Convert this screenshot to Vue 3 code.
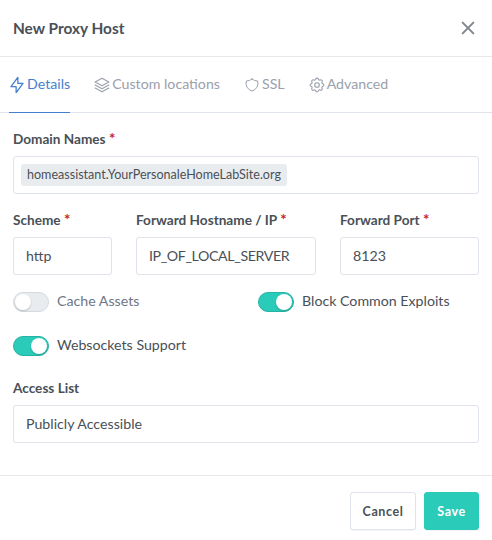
<script setup>
const tabs = [
  { name: 'Details', icon: 'bolt', box: '2.7 2.7 18.6 18.6', active: true },
  { name: 'Custom locations', icon: 'layers', box: '1.500 1.500 21 21' },
  { name: 'SSL', icon: 'shield', box: '0 0 24 24' },
  { name: 'Advanced', icon: 'gear', box: '1.500 1.500 21 21' }
]
const row = [
  { label: 'Scheme', value: 'http' },
  { label: 'Forward Hostname / IP', value: 'IP_OF_LOCAL_SERVER', tight: true },
  { label: 'Forward Port', value: '8123' }
]
const toggles = [
  { label: 'Cache Assets', on: false },
  { label: 'Block Common Exploits', on: true },
  { label: 'Websockets Support', on: true }
]
</script>

<template>
  <div class="modal">
    <header class="head">
      <h1 class="title">New Proxy Host</h1>
      <svg class="close" viewBox="0 0 24 24" width="16" height="16" fill="none" stroke="currentColor" stroke-width="3" stroke-linecap="round"><path d="M4 4l16 16M20 4L4 20"/></svg>
    </header>
    <nav class="tabs">
      <a v-for="t in tabs" :key="t.name" class="tab" :class="{ active: t.active }">
        <svg class="ico" :viewBox="t.box" fill="none" stroke="currentColor" stroke-width="1.5" stroke-linecap="round" stroke-linejoin="round">
          <path v-if="t.icon === 'bolt'" d="M13 3v7h6l-8 11v-7H5l8-11z"/>
          <g v-else-if="t.icon === 'layers'"><path d="M12 3L3 8l9 5 9-5-9-5z"/><path d="M3 12l9 5 9-5"/><path d="M3 16l9 5 9-5"/></g>
          <path v-else-if="t.icon === 'shield'" d="M12 3a12 12 0 0 0 8.5 3A12 12 0 0 1 12 21 12 12 0 0 1 3.500 6 12 12 0 0 0 12 3z"/>
          <g v-else><path d="M10.300 4.300c.4-1.800 3-1.800 3.400 0a1.700 1.700 0 0 0 2.600 1.100c1.500-.9 3.300.8 2.400 2.400a1.700 1.700 0 0 0 1 2.500c1.800.4 1.800 3 0 3.400a1.700 1.700 0 0 0-1 2.600c.9 1.500-.9 3.300-2.400 2.400a1.700 1.700 0 0 0-2.600 1c-.4 1.800-3 1.800-3.400 0a1.700 1.700 0 0 0-2.600-1c-1.500.9-3.300-.9-2.400-2.400a1.700 1.700 0 0 0-1-2.600c-1.800-.4-1.800-3 0-3.400a1.700 1.700 0 0 0 1-2.500c-.9-1.600.9-3.300 2.400-2.400 1 .6 2.300.1 2.600-1.100z"/><circle cx="12" cy="12" r="3"/></g>
        </svg>
        <span class="tabtext">{{ t.name }}</span>
      </a>
    </nav>
    <main class="body">
      <div class="field">
        <label class="label">Domain Names <b class="req">*</b></label>
        <div class="input domain"><span class="chip">homeassistant.YourPersonaleHomeLabSite.org</span></div>
      </div>
      <div class="triple">
        <div v-for="f in row" :key="f.label" class="field">
          <label class="label">{{ f.label }} <b class="req">*</b></label>
          <div class="input" :class="{ tight: f.tight }">{{ f.value }}</div>
        </div>
      </div>
      <div class="toggles">
        <div v-for="t in toggles" :key="t.label" class="toggle" :class="{ on: t.on }">
          <span class="switch"><span class="knob"></span></span>
          <span class="tlabel">{{ t.label }}</span>
        </div>
      </div>
      <div class="field">
        <label class="label">Access List</label>
        <div class="input">Publicly Accessible</div>
      </div>
    </main>
    <footer class="foot">
      <button class="btn cancel">Cancel</button>
      <button class="btn save">Save</button>
    </footer>
  </div>
</template>

<style scoped>
.modal {
  width: 492px;
  height: 540px;
  background: #fff;
  font-family: "Lato", "Noto Sans", sans-serif;
  font-size: 14.2px;
  color: #495057;
  overflow: hidden;
}
.head {
  height: 56px;
  border-bottom: 1px solid #e6e8ec;
  display: flex;
  align-items: center;
  justify-content: space-between;
  padding: 0 16px 0 13px;
}
.title {
  margin: 0;
  font-size: 15.4px;
  font-weight: 700;
  color: #495057;
}
.close { color: #7f868d; }
.tabs {
  height: 55px;
  display: flex;
  padding-left: 9px;
  border-bottom: 1px solid #dfe3ea;
}
.tab {
  display: flex;
  align-items: center;
  gap: 2px;
  margin-right: 24px;
  color: #9aa0ac;
  height: 56px;
  box-sizing: border-box;
  border-bottom: 1px solid transparent;
}
.tab.active {
  color: #467fcf;
  border-bottom-color: #467fcf;
}
.tabtext { padding-bottom: 2px; }
.ico { width: 16px; height: 16px; flex: none; }
.body { padding: 17px 13px 0; }
.field { display: flex; flex-direction: column; }
.label {
  font-size: 13.6px;
  font-weight: 700;
  line-height: 18px;
  margin-bottom: 8px;
  color: #495057;
}
.req { color: #cd201f; font-weight: 700; font-size: 15px; line-height: 1; }
.input {
  height: 38px;
  box-sizing: border-box;
  border: 1px solid #dfe3ea;
  border-radius: 3px;
  padding: 0 12px 2px;
  display: flex;
  align-items: center;
  color: #495057;
  white-space: nowrap;
}
.tight { letter-spacing: -.38px; }
.input.domain { padding: 0 7px; }
.chip {
  background: #e9ecef;
  border-radius: 3px;
  padding: 0 6px;
  height: 22px;
  line-height: 22px;
  font-size: 12.55px;
}
.triple {
  display: grid;
  grid-template-columns: 99px 180px 1fr;
  column-gap: 24px;
  margin-top: 17px;
}
.toggles {
  display: grid;
  grid-template-columns: 245px 1fr;
  row-gap: 24px;
  margin-top: 17px;
  margin-bottom: 23px;
}
.toggle { display: flex; align-items: center; gap: 8px; height: 20px; }
.switch {
  width: 36px;
  height: 20px;
  box-sizing: border-box;
  border-radius: 10px;
  background: #e9ecef;
  border: 1px solid #d5dae2;
  display: flex;
  align-items: center;
  padding: 0 1px;
}
.knob {
  width: 16px;
  height: 16px;
  border-radius: 50%;
  background: #fff;
  box-shadow: 0 1px 2px rgba(0, 0, 0, .2);
}
.toggle.on .switch {
  background: #2bcbba;
  border-color: #26b3a5;
  justify-content: flex-end;
}
.tlabel { color: #6e7687; padding-bottom: 3px; }
.toggle.on .tlabel { color: #495057; }
.foot {
  margin-top: 32px;
  border-top: 1px solid #e6e8ec;
  padding: 16px 13px 0;
  display: flex;
  justify-content: flex-end;
  gap: 8px;
}
.btn {
  height: 38px;
  border-radius: 3px;
  font-family: inherit;
  font-size: 12.500px;
  font-weight: 700;
  letter-spacing: .6px;
  box-shadow: 0 1px 1px rgba(0, 0, 0, .05);
}
.cancel {
  width: 66px;
  background: #fff;
  color: #495057;
  border: 1px solid #dfe3ea;
}
.save {
  width: 55px;
  background: #2bcbba;
  color: #fff;
  border: 1px solid #2bcbba;
}
</style>
